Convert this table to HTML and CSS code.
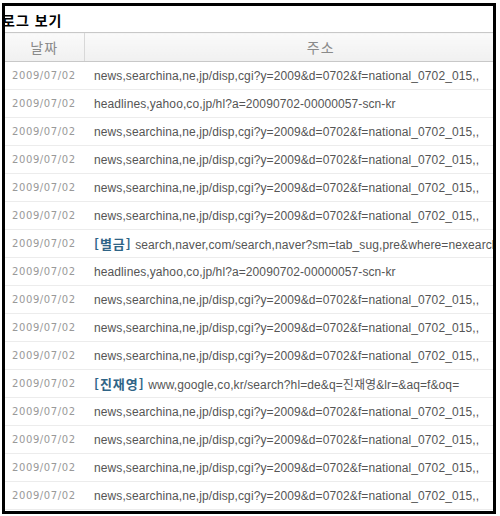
FILE: index.html
```html
<!DOCTYPE html>
<html lang="ko">
<head>
    <meta charset="UTF-8">
    <title>로그 보기</title>
    <link rel="stylesheet" href="styles.css">
</head>
<body>
    <div class="frame">
        <h1 class="title">로그 보기</h1>
        <table class="log">
            <colgroup>
                <col class="col-date">
                <col class="col-url">
            </colgroup>
            <thead>
                <tr>
                    <th>날짜</th>
                    <th>주소</th>
                </tr>
            </thead>
            <tbody>
                <tr><td class="date">2009/07/02</td><td class="url">news,searchina,ne,jp/disp,cgi?y=2009&amp;d=0702&amp;f=national_0702_015,,</td></tr>
                <tr><td class="date">2009/07/02</td><td class="url">headlines,yahoo,co,jp/hl?a=20090702-00000057-scn-kr</td></tr>
                <tr><td class="date">2009/07/02</td><td class="url">news,searchina,ne,jp/disp,cgi?y=2009&amp;d=0702&amp;f=national_0702_015,,</td></tr>
                <tr><td class="date">2009/07/02</td><td class="url">news,searchina,ne,jp/disp,cgi?y=2009&amp;d=0702&amp;f=national_0702_015,,</td></tr>
                <tr><td class="date">2009/07/02</td><td class="url">news,searchina,ne,jp/disp,cgi?y=2009&amp;d=0702&amp;f=national_0702_015,,</td></tr>
                <tr><td class="date">2009/07/02</td><td class="url">news,searchina,ne,jp/disp,cgi?y=2009&amp;d=0702&amp;f=national_0702_015,,</td></tr>
                <tr><td class="date">2009/07/02</td><td class="url"><b class="tag">[별금]</b> search,naver,com/search,naver?sm=tab_sug,pre&amp;where=nexearch</td></tr>
                <tr><td class="date">2009/07/02</td><td class="url">headlines,yahoo,co,jp/hl?a=20090702-00000057-scn-kr</td></tr>
                <tr><td class="date">2009/07/02</td><td class="url">news,searchina,ne,jp/disp,cgi?y=2009&amp;d=0702&amp;f=national_0702_015,,</td></tr>
                <tr><td class="date">2009/07/02</td><td class="url">news,searchina,ne,jp/disp,cgi?y=2009&amp;d=0702&amp;f=national_0702_015,,</td></tr>
                <tr><td class="date">2009/07/02</td><td class="url">news,searchina,ne,jp/disp,cgi?y=2009&amp;d=0702&amp;f=national_0702_015,,</td></tr>
                <tr><td class="date">2009/07/02</td><td class="url"><b class="tag">[진재영]</b> www,google,co,kr/search?hl=de&amp;q=진재영&amp;lr=&amp;aq=f&amp;oq=</td></tr>
                <tr><td class="date">2009/07/02</td><td class="url">news,searchina,ne,jp/disp,cgi?y=2009&amp;d=0702&amp;f=national_0702_015,,</td></tr>
                <tr><td class="date">2009/07/02</td><td class="url">news,searchina,ne,jp/disp,cgi?y=2009&amp;d=0702&amp;f=national_0702_015,,</td></tr>
                <tr><td class="date">2009/07/02</td><td class="url">news,searchina,ne,jp/disp,cgi?y=2009&amp;d=0702&amp;f=national_0702_015,,</td></tr>
                <tr><td class="date">2009/07/02</td><td class="url">news,searchina,ne,jp/disp,cgi?y=2009&amp;d=0702&amp;f=national_0702_015,,</td></tr>
            </tbody>
        </table>
    </div>
</body>
</html>
```

FILE: styles.css
```css
body {
    margin: 0;
    padding: 0;
    background: #fff;
    font-family: "Liberation Sans", "Noto Sans CJK KR", sans-serif;
}

.frame {
    margin: 3px 4px 0 2px;
    width: 488px;
    height: 505px;
    border: 3px solid #000;
    overflow: hidden;
}

.title {
    margin: 0 0 0 -3px;
    height: 26px;
    line-height: 29px;
    font-size: 14px;
    font-weight: bold;
    letter-spacing: 1px;
    color: #000;
    font-family: "Noto Sans CJK KR", sans-serif;
}

.log {
    width: 500px;
    border-collapse: collapse;
    table-layout: fixed;
}

.col-date {
    width: 79px;
}

.log th {
    height: 28px;
    padding: 0;
    border-top: 1px solid #c8c8c8;
    border-bottom: 1px solid #c8c8c8;
    background: linear-gradient(#fafafa, #f0f0f0);
    color: #8a8a8a;
    font-family: "Noto Sans CJK KR", sans-serif;
    font-size: 14px;
    font-weight: normal;
    letter-spacing: 1px;
    text-align: center;
}

.log th + th {
    border-left: 1px solid #d8d8d8;
    padding-left: 52px;
}

.log td {
    height: 27px;
    padding: 0;
    border-bottom: 1px solid #ececec;
    white-space: nowrap;
    overflow: hidden;
}

.date {
    padding-left: 7px !important;
    font-family: "DejaVu Sans", sans-serif;
    font-size: 10px;
    letter-spacing: 0.6px;
    color: #999;
}

.url {
    padding-left: 10px !important;
    font-size: 12px;
    letter-spacing: 0.1px;
    color: #555;
}

.tag {
    color: #2f6486;
    font-family: "Noto Sans CJK KR", sans-serif;
    font-size: 13px;
    letter-spacing: 1px;
}
```
